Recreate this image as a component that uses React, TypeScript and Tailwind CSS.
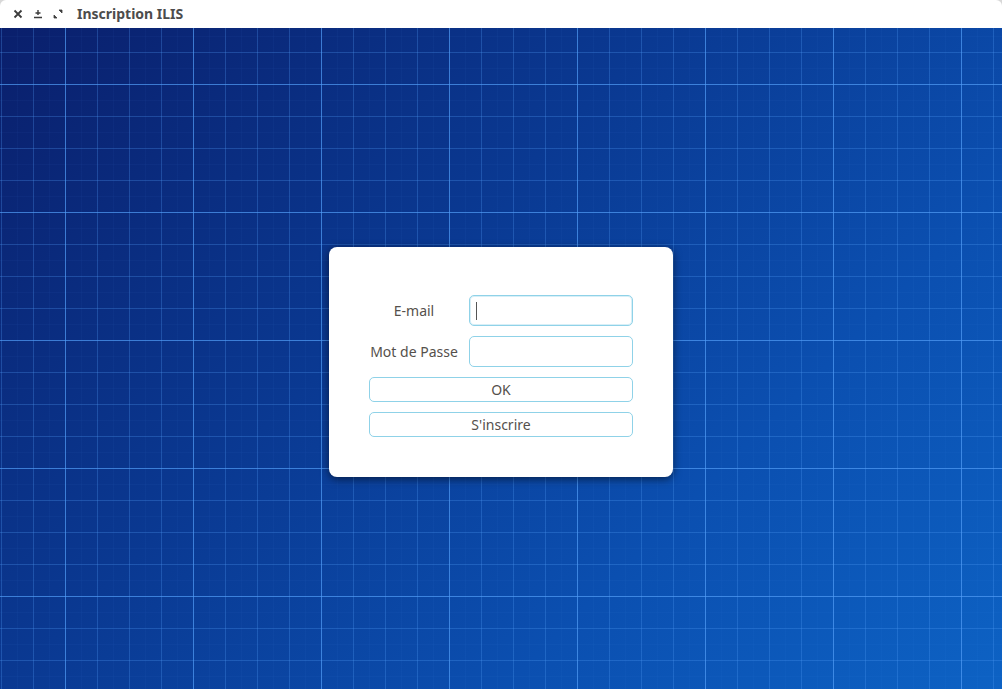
import React from 'react';

const TitleBar: React.FC = () => (
  <div className="h-[28px] bg-white rounded-t-[6px] flex items-center pl-[13px] gap-[10px] shrink-0">
    <svg width="10" height="10" viewBox="0 0 10 10" className="text-[#3c3c3c]">
      <path d="M1.5 1.5 L8.5 8.5 M8.5 1.5 L1.5 8.5" stroke="currentColor" strokeWidth="1.8" />
    </svg>
    <svg width="10" height="10" viewBox="0 0 10 10" className="text-[#3c3c3c]">
      <path d="M5 1 V6 M2.5 4 H7.5 M1 8.5 H9" stroke="currentColor" strokeWidth="1.4" />
    </svg>
    <svg width="10" height="10" viewBox="0 0 10 10" className="text-[#3c3c3c]">
      <path d="M6 1 H9 V4 Z M1 6 V9 H4 Z" fill="currentColor" stroke="currentColor" strokeWidth="0.8" />
    </svg>
    <span className="ml-[4px] text-[14px] font-bold text-[#4c4c4c] font-['Noto_Sans',sans-serif] leading-none">
      Inscription ILIS
    </span>
  </div>
);

const App: React.FC = () => {
  return (
    <div className="w-[1002px] h-[689px] flex flex-col bg-[#d8d8d8] font-['Noto_Sans',sans-serif] overflow-hidden">
      <TitleBar />
      <div
        className="flex-1 flex items-start justify-center pt-[219px]
          bg-[linear-gradient(to_right,rgba(80,155,245,0.6)_1px,transparent_1px),linear-gradient(to_bottom,rgba(80,155,245,0.6)_1px,transparent_1px),linear-gradient(to_right,rgba(80,155,245,0.26)_1px,transparent_1px),linear-gradient(to_bottom,rgba(80,155,245,0.26)_1px,transparent_1px),linear-gradient(to_right,rgba(80,155,245,0.045)_1px,transparent_1px),linear-gradient(to_bottom,rgba(80,155,245,0.045)_1px,transparent_1px),linear-gradient(135deg,#0a1f6c_0%,#0a3992_40%,#0b4fb0_70%,#0d62c4_100%)]
          [background-size:128px_128px,128px_128px,32px_32px,32px_32px,16px_16px,16px_16px,100%_100%]
          [background-position:65px_56px,65px_56px,1px_24px,1px_24px,1px_8px,1px_8px,0_0]"
      >
        <div className="w-[344px] h-[230px] bg-white rounded-[8px] shadow-[0_2px_8px_rgba(0,0,0,0.55)] pt-[48px] px-[40px]">
          <div className="flex flex-col gap-[10px]">
            <div className="flex items-center gap-[10px]">
              <label className="w-[90px] text-center text-[14px] text-[#55504c]">E-mail</label>
              <div className="w-[164px] h-[31px] rounded-[5px] border border-[#8fd2e8] shadow-[inset_0_0_0_1px_rgba(143,210,232,0.35)] flex items-center pl-[6px]">
                <div className="w-px h-[18px] bg-[#555]" />
              </div>
            </div>
            <div className="flex items-center gap-[10px]">
              <label className="w-[90px] text-center text-[14px] text-[#55504c] whitespace-nowrap">Mot de Passe</label>
              <div className="w-[164px] h-[31px] rounded-[5px] border border-[#8fd2e8]" />
            </div>
            <button className="w-[264px] h-[25px] rounded-[5px] border border-[#8fd2e8] bg-white text-[14px] text-[#55504c] leading-none">
              OK
            </button>
            <button className="w-[264px] h-[25px] rounded-[5px] border border-[#8fd2e8] bg-white text-[14px] text-[#55504c] leading-none">
              S'inscrire
            </button>
          </div>
        </div>
      </div>
    </div>
  );
};

export default App;
